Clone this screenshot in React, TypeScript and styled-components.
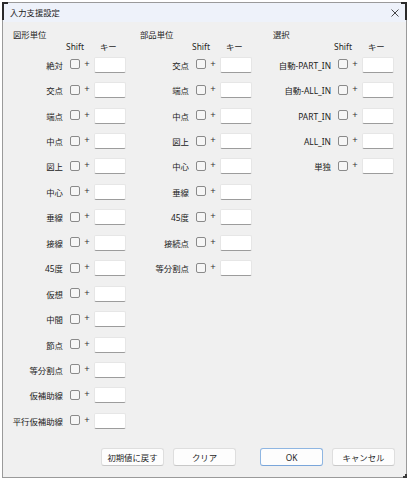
import React from "react";
import styled, { createGlobalStyle } from "styled-components";

const GlobalStyle = createGlobalStyle`
  html, body { margin: 0; padding: 0; background: #ffffff; }
  body {
    font-family: "Noto Sans", "Noto Sans CJK JP", sans-serif;
    color: #1f1f1f;
  }
  * { box-sizing: border-box; }
`;

const Window = styled.div`
  position: relative;
  width: 405px;
  height: 476px;
  margin: 2px 0 0 2px;
  border: 1px solid #9a9a9a;
  background: #f0f0f0;
  display: flex;
  flex-direction: column;
  &::before {
    content: "";
    position: absolute;
    left: -1px;
    top: -1px;
    width: 4px;
    height: 16px;
    border-left: 2px solid #2a2a2a;
    border-top: 2px solid #2a2a2a;
  }
  &::after {
    content: "";
    position: absolute;
    right: -1px;
    top: -1px;
    width: 4px;
    height: 16px;
    border-right: 2px solid #2a2a2a;
    border-top: 2px solid #2a2a2a;
  }
`;

const CornerBR = styled.span`
  position: absolute;
  right: -1px;
  bottom: -1px;
  width: 4px;
  height: 4px;
  border-right: 2px solid #3a3a3a;
  border-bottom: 2px solid #3a3a3a;
`;

const TitleBar = styled.div`
  height: 19px;
  flex: 0 0 19px;
  background: #eef2fa;
  display: flex;
  align-items: center;
  justify-content: space-between;
  padding: 0 7px 0 7px;
`;

const TitleText = styled.span`
  font-size: 8.3px;
  line-height: 12px;
  color: #1a1a1a;
`;

const CloseIcon = styled.svg`
  width: 8px;
  height: 8px;
  margin-right: 0;
  margin-top: 1px;
`;

const Body = styled.div`
  flex: 1;
  display: flex;
  flex-direction: column;
  padding: 7px 11px 11px 7px;
`;

const Columns = styled.div`
  display: flex;
`;

const Column = styled.div<{ $w: number }>`
  width: ${(p) => p.$w}px;
  flex: 0 0 ${(p) => p.$w}px;
  display: flex;
  flex-direction: column;
`;

const GroupHeader = styled.div`
  height: 12px;
  line-height: 12px;
  padding-left: 3px;
  font-size: 8.4px;
  color: #1f1f1f;
`;

const Grid = styled.div<{ $label: number }>`
  display: grid;
  grid-template-columns: ${(p) => p.$label}px 10px 14px 32px;
  grid-auto-rows: 25.45px;
  align-items: center;
`;

const HeadGrid = styled(Grid)`
  grid-auto-rows: 11px;
  margin-bottom: 0;
`;

const ShiftHead = styled.span`
  grid-column: 2;
  justify-self: center;
  font-size: 8.4px;
  line-height: 11px;
  white-space: nowrap;
`;

const KeyHead = styled.span`
  grid-column: 4;
  justify-self: start;
  padding-left: 6px;
  font-size: 8.4px;
  line-height: 11px;
  white-space: nowrap;
`;

const Label = styled.span`
  grid-column: 1;
  justify-self: end;
  padding-right: 7px;
  font-size: 8.4px;
  line-height: 12px;
  margin-top: 2px;
  white-space: nowrap;
  color: #222;
`;

const Check = styled.span`
  grid-column: 2;
  width: 10px;
  height: 10px;
  border: 1px solid #8a8a8a;
  border-radius: 2px;
  background: #f6f6f6;
  margin-top: -1px;
`;

const Plus = styled.span`
  grid-column: 3;
  justify-self: center;
  font-size: 9.5px;
  line-height: 10px;
  margin-top: -2px;
  color: #333;
`;

const KeyInput = styled.span`
  grid-column: 4;
  height: 16px;
  background: #ffffff;
  border: 1px solid #e6e6e6;
  border-bottom-color: #9c9c9c;
  border-radius: 2px;
`;

const ButtonRow = styled.div`
  margin-top: auto;
  display: flex;
  justify-content: flex-end;
  align-items: center;
`;

const Btn = styled.button<{ $primary?: boolean; $gap?: number }>`
  width: 63px;
  height: 18px;
  margin-left: ${(p) => p.$gap ?? 9}px;
  padding: 0;
  font-family: "Noto Sans", "Noto Sans CJK JP", sans-serif;
  font-size: 8.4px;
  color: #1f1f1f;
  background: #fdfdfd;
  border: 1px solid ${(p) => (p.$primary ? "#8fb6e2" : "#dedede")};
  border-bottom-color: ${(p) => (p.$primary ? "#7aa6da" : "#c8c8c8")};
  border-radius: 3px;
`;

type Group = { title: string; width: number; label: number; items: string[] };

const groups: Group[] = [
  {
    title: "図形単位",
    width: 127,
    label: 60,
    items: [
      "絶対",
      "交点",
      "端点",
      "中点",
      "図上",
      "中心",
      "垂線",
      "接線",
      "45度",
      "仮想",
      "中間",
      "節点",
      "等分割点",
      "仮補助線",
      "平行仮補助線",
    ],
  },
  {
    title: "部品単位",
    width: 133,
    label: 59,
    items: ["交点", "端点", "中点", "図上", "中心", "垂線", "45度", "接続点", "等分割点"],
  },
  {
    title: "選択",
    width: 130,
    label: 68,
    items: ["自動-PART_IN", "自動-ALL_IN", "PART_IN", "ALL_IN", "単独"],
  },
];

export default function App() {
  return (
    <>
      <GlobalStyle />
      <Window>
        <TitleBar>
          <TitleText>入力支援設定</TitleText>
          <CloseIcon viewBox="0 0 8 8">
            <path d="M0.5 0.5 L7.5 7.5 M7.5 0.5 L0.5 7.5" stroke="#333" strokeWidth="0.9" fill="none" />
          </CloseIcon>
        </TitleBar>
        <Body>
          <Columns>
            {groups.map((g) => (
              <Column key={g.title} $w={g.width}>
                <GroupHeader>{g.title}</GroupHeader>
                <HeadGrid $label={g.label}>
                  <ShiftHead>Shift</ShiftHead>
                  <KeyHead>キー</KeyHead>
                </HeadGrid>
                <Grid $label={g.label}>
                  {g.items.map((it) => (
                    <React.Fragment key={it}>
                      <Label>{it}</Label>
                      <Check />
                      <Plus>+</Plus>
                      <KeyInput />
                    </React.Fragment>
                  ))}
                </Grid>
              </Column>
            ))}
          </Columns>
          <ButtonRow>
            <Btn>初期値に戻す</Btn>
            <Btn>クリア</Btn>
            <Btn $primary $gap={24}>OK</Btn>
            <Btn>キャンセル</Btn>
          </ButtonRow>
        </Body>
        <CornerBR />
      </Window>
    </>
  );
}
